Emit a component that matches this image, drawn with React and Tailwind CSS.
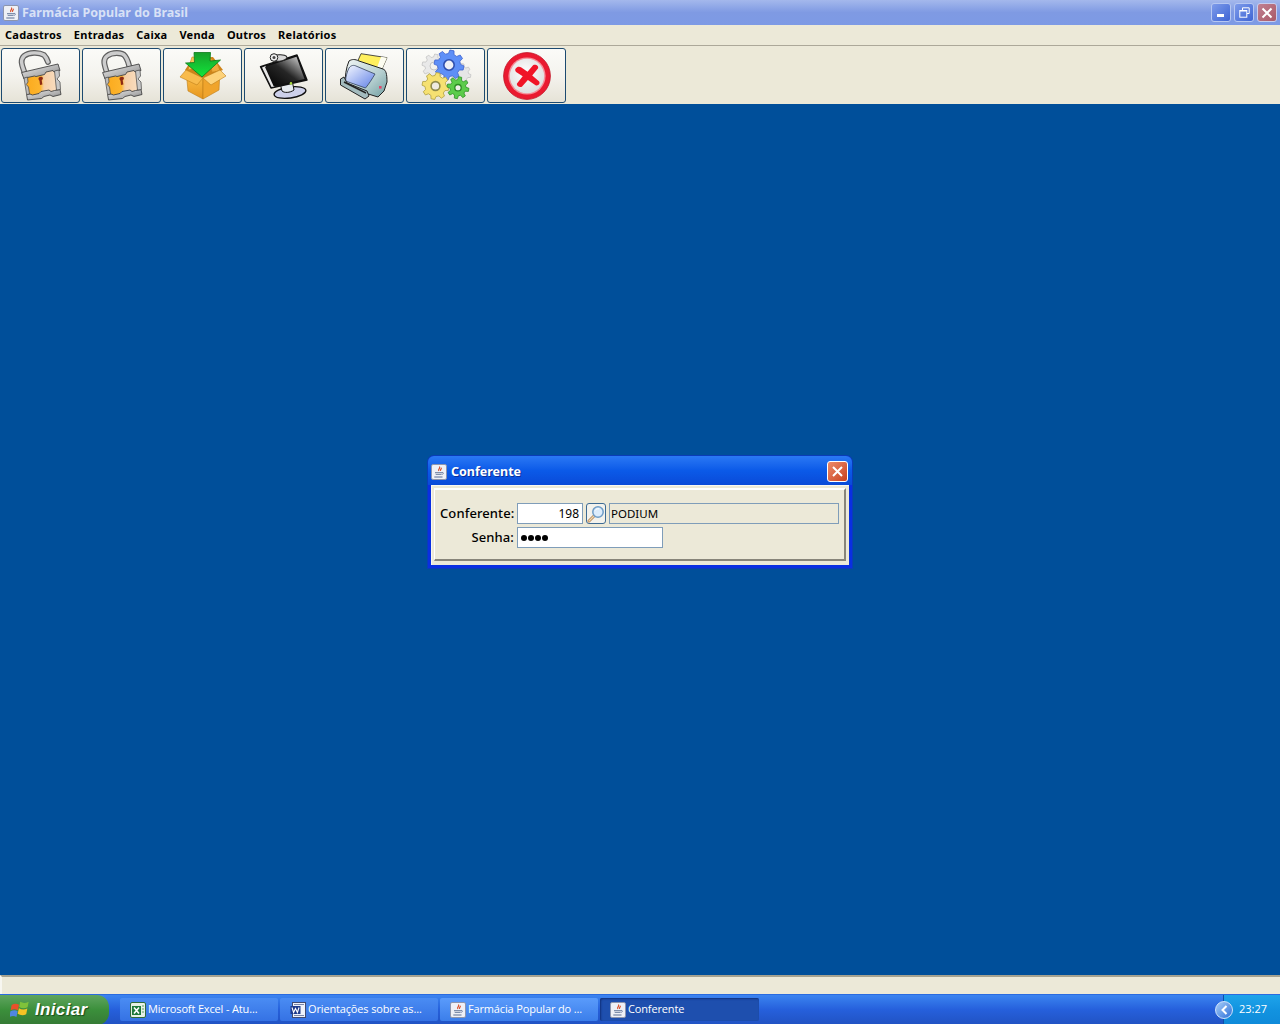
import React from "react";

function gearPath(cx, cy, R, r, teeth) {
  const pts = [];
  const step = (Math.PI * 2) / teeth;
  for (let i = 0; i < teeth; i++) {
    const a = i * step + 0.2;
    const q = (ang, rad) => `${(cx + Math.cos(ang) * rad).toFixed(2)} ${(cy + Math.sin(ang) * rad).toFixed(2)}`;
    pts.push(q(a - step * 0.32, r), q(a - step * 0.18, R), q(a + step * 0.18, R), q(a + step * 0.32, r));
  }
  return "M" + pts.join("L") + "Z";
}

function JavaIcon({ size = 16 }) {
  return (
    <svg width={size} height={size} viewBox="0 0 16 16" className="shrink-0">
      <rect x="0.5" y="0.5" width="15" height="15" rx="1.5" fill="#eef0f6" stroke="#8d95ad" />
      <path d="M8.5 2.5c1.4 1.6-1.8 2.6-.7 4.6M10.3 3.8c.5 1-1.1 1.6-.8 3" fill="none" stroke="#d9471f" strokeWidth="1.1" />
      <path d="M4 8.3h7v.9H4zM4.7 10.2h5.6v.9H4.7zM3.3 12.4h8.2v1H3.3z" fill="#5b6f94" />
      <path d="M11 8.4c2 -.3 2 1.9 -.4 2" fill="none" stroke="#5b6f94" strokeWidth=".8" />
    </svg>
  );
}

function LockIcon({ closed, id }) {
  const sh = closed
    ? "M9 21C7 14 4 8 9 4C14 0 24 0 27 4C30 8 31 12 32 18"
    : "M8 22C6 15 2 9 7 4C12 0 22 0 27 3C29 5 30 7 31 10";
  return (
    <svg width="48" height="48" viewBox="0 0 48 48" className="overflow-visible">
      <defs>
        <linearGradient id={`lockSilver${id}`} x1="0" y1="0" x2="1" y2="1">
          <stop offset="0" stopColor="#ececec" />
          <stop offset=".6" stopColor="#b0b0b0" />
          <stop offset="1" stopColor="#7c7c7c" />
        </linearGradient>
        <linearGradient id={`lockBody${id}`} x1="0" y1="0" x2="1" y2="0">
          <stop offset="0" stopColor="#fba91c" />
          <stop offset=".45" stopColor="#fdb52e" />
          <stop offset=".56" stopColor="#f6cfa6" />
          <stop offset="1" stopColor="#f9dfc4" />
        </linearGradient>
      </defs>
      <path d={sh} fill="none" stroke="#5e5e5e" strokeWidth="5.8" strokeLinecap="round" />
      <path d={sh} fill="none" stroke="#cdcdcd" strokeWidth="3.4" strokeLinecap="round" />
      <path d="M8 23L39 16L42 40L11 46Z" fill={`url(#lockBody${id})`} />
      <path d="M21.5 26.5c0-2 3.5-2.6 4.3-.8c.4 1.2-.4 2.1-1.1 2.5l.7 4.3l-2.4.5l-.5-4.3c-.6-.4-1-1.2-1-2.2Z" fill="#8e2a12" />
      <path d="M7 27L4.6 20.5L41 12L43 18.5L37 20L36 18.5L29 20L27.5 22.5L19 24.5L17.5 24L10.5 25.5Z" fill={`url(#lockSilver${id})`} stroke="#444" strokeWidth=".9" />
      <path d="M10.5 48L9.6 42.5L13 42L15.5 43L22 41.5L24 39.5L32 38L34 39.5L37.5 38.5L43 37.5L44 42.5L36 44.5L33 43L27 44.5L24.5 46.5Z" fill={`url(#lockSilver${id})`} stroke="#444" strokeWidth=".9" />
      <path d="M7 26L10.5 25L11 30L9.3 32.5L11.5 35L12.5 42L9.6 42.5Z" fill="#bdbdbd" stroke="#444" strokeWidth=".7" />
      <path d="M37.5 19L42 18L42.5 24L40 27L43 30L43.5 37.5L39.5 38Z" fill="#c8c8c8" stroke="#444" strokeWidth=".7" />
    </svg>
  );
}

function BoxIcon() {
  return (
    <svg width="48" height="48" viewBox="0 0 48 48" className="overflow-visible">
      <defs>
        <linearGradient id="boxFront" x1="0" y1="0" x2="0" y2="1">
          <stop offset="0" stopColor="#ffc64f" />
          <stop offset="1" stopColor="#e6951d" />
        </linearGradient>
        <linearGradient id="boxArrow" x1="0" y1="0" x2="0" y2="1">
          <stop offset="0" stopColor="#17a02a" />
          <stop offset="1" stopColor="#12e63c" />
        </linearGradient>
      </defs>
      <path d="M14 6L34 5L44 18L24 26L6 18Z" fill="#cf8419" />
      <path d="M13 5L30 6L26 13L9 18Z" fill="#fdc559" stroke="#c98720" strokeWidth=".6" />
      <path d="M31 6L38 11L41 19L33 20Z" fill="#eeaa3c" stroke="#c98720" strokeWidth=".5" />
      <path d="M7 18L24 26L24 47L9 39Z" fill="url(#boxFront)" stroke="#be7e1a" strokeWidth=".6" />
      <path d="M24 26L41 18L40 38L24 47Z" fill="#f0a42c" stroke="#be7e1a" strokeWidth=".6" />
      <path d="M7 18L1 25L18 33L24 26Z" fill="#f8bb4c" stroke="#be7e1a" strokeWidth=".6" />
      <path d="M41 18L47 24L32 33L24 26Z" fill="#fdd27a" stroke="#be7e1a" strokeWidth=".6" />
      <path d="M15 0.5H31.5L31 9L41.5 8L23 25L6.5 11L15.5 10.5Z" fill="url(#boxArrow)" stroke="#0b7a19" strokeWidth=".8" />
    </svg>
  );
}

function MonitorIcon() {
  return (
    <svg width="48" height="48" viewBox="0 0 48 48" className="overflow-visible">
      <defs>
        <linearGradient id="monScreen" x1="0" y1="1" x2="1" y2="0">
          <stop offset="0" stopColor="#000" />
          <stop offset=".5" stopColor="#262626" />
          <stop offset="1" stopColor="#e4e4e4" />
        </linearGradient>
      </defs>
      <ellipse cx="30" cy="40.5" rx="16" ry="5.5" transform="rotate(-8 30 40.5)" fill="#cdd0ea" stroke="#111" strokeWidth="1.4" />
      <path d="M20 31L32 28L34 38C30 41 24 41 22 39Z" fill="#e7eaf0" stroke="#111" />
      <path d="M0.5 14.7L37 3L47 28L11 36Z" fill="#111" stroke="#111" strokeWidth="1.4" strokeLinejoin="round" />
      <path d="M2 15.5L5.5 14L14.5 34.5L11.5 35Z" fill="#e8e8e8" />
      <path d="M5 15L36.5 4.8L44.5 27L13.5 34Z" fill="url(#monScreen)" />
      <circle cx="31" cy="31.4" r="1.3" fill="#a6d640" />
      <ellipse cx="19" cy="6" rx="8" ry="3.2" transform="rotate(-5 19 6)" fill="#d8d8d8" stroke="#222" />
      <circle cx="14" cy="5.5" r="3.8" fill="#f0f0f0" stroke="#222" />
      <circle cx="14" cy="5.5" r="1.5" fill="#444" />
    </svg>
  );
}

function PrinterIcon() {
  return (
    <svg width="48" height="48" viewBox="0 0 48 48" className="overflow-visible">
      <defs>
        <linearGradient id="printerBody" x1="0" y1="0" x2="1" y2="1">
          <stop offset="0" stopColor="#f0f5f5" />
          <stop offset=".6" stopColor="#b6cfd0" />
          <stop offset="1" stopColor="#6f9da0" />
        </linearGradient>
        <linearGradient id="printerPanel" x1="0" y1="0" x2="1" y2="1">
          <stop offset="0" stopColor="#f5f8ff" />
          <stop offset="1" stopColor="#5f80e6" />
        </linearGradient>
      </defs>
      <path d="M20 1.7L46 5.7L41 17L16 10.7Z" fill="#fff05e" stroke="#222" strokeWidth=".8" />
      <path d="M40 4.8L46 5.7L41 17L36 15.7Z" fill="#fdfdf1" />
      <path d="M8 9C11 7 14 7 18 9L42 17C45 18 46 22 46 30L43 39L37 45L24 41L4 33C4 24 5 16 8 9Z" fill="url(#printerBody)" stroke="#222" strokeWidth="1" />
      <path d="M8 16C10 13 13 13 15 14L34 22C31 27 28 32 24.5 36L4.5 29C5 24 6 20 8 16Z" fill="url(#printerPanel)" stroke="#33415c" strokeWidth=".8" />
      <path d="M-.5 27L3 25L6 31L26 39L28 44L24 47L-.5 33Z" fill="#a3bbbe" stroke="#222" strokeWidth="1" />
      <path d="M3 30L25 41" stroke="#222" strokeWidth="1.4" />
      <rect x="38" y="34" width="2.6" height="2.6" fill="#e0486a" />
    </svg>
  );
}

function GearsIcon() {
  return (
    <svg width="50" height="50" viewBox="0 0 50 50" className="overflow-visible">
      <path d={gearPath(13, 15, 12, 9, 8)} fill="#e9e9e9" stroke="#c4c4c4" strokeWidth=".8" />
      <circle cx="13" cy="15" r="4" fill="#f4f3ee" stroke="#c4c4c4" />
      <path d={gearPath(39.5, 23, 10.5, 8, 8)} fill="#e6e6e6" stroke="#c4c4c4" strokeWidth=".8" />
      <path d={gearPath(28, 14, 15, 11.5, 8)} fill="#5e8ff7" stroke="#3d62cf" strokeWidth=".8" />
      <circle cx="28" cy="14" r="5.2" fill="#eef0f6" stroke="#2f4fae" strokeWidth="1.6" />
      <path d={gearPath(14.5, 35, 13.5, 10.5, 8)} fill="#f6e171" stroke="#b0a040" strokeWidth=".8" />
      <circle cx="14.5" cy="35" r="4.4" fill="#eeeae0" stroke="#8f8a4a" strokeWidth="1.6" />
      <path d={gearPath(37, 36.7, 11, 8, 8)} fill="#5ccc4b" stroke="#2f9026" strokeWidth=".8" />
      <circle cx="37" cy="36.7" r="3.2" fill="#eef0ea" stroke="#2c8a23" strokeWidth="1.3" />
    </svg>
  );
}

function StopIcon() {
  return (
    <svg width="48" height="48" viewBox="0 0 48 48" className="overflow-visible">
      <defs>
        <radialGradient id="stopFace" cx=".45" cy=".4" r=".7">
          <stop offset="0" stopColor="#ffffff" />
          <stop offset="1" stopColor="#d9d9d9" />
        </radialGradient>
      </defs>
      <circle cx="24" cy="24" r="23.4" fill="#ea1a30" stroke="#c01426" strokeWidth=".8" />
      <circle cx="24" cy="24" r="18.6" fill="#f58e98" />
      <circle cx="24" cy="24" r="17.2" fill="url(#stopFace)" />
      <path
        transform="translate(24 24) scale(.95 .82) rotate(-5) translate(-24 -24)"
        d="M12.5 14.5C15 11 17.5 12 19 13.2L25 19L31.5 11.5C34 10 37.5 12.5 36.5 15.5L29.5 24L36 31.5C37.5 34 35 37.5 32 36L24.5 29L17.5 36.5C15 37.5 12 35.5 12.5 32.5L19.5 24L13 18C12.3 17 12 15.5 12.5 14.5Z"
        fill="#f01427"
      />
    </svg>
  );
}

function Magnifier() {
  return (
    <svg width="18" height="18" viewBox="0 0 18 18">
      <path d="M2 16L8 10" stroke="#b8895a" strokeWidth="3" strokeLinecap="round" />
      <path d="M2 16L8 10" stroke="#f0d9b0" strokeWidth="1.2" strokeLinecap="round" />
      <circle cx="11" cy="7" r="5.2" fill="#dcecfb" stroke="#6e9cc6" strokeWidth="1.5" />
      <path d="M8.2 5.5C9 4 10.5 3.6 12 3.8" stroke="#fff" fill="none" />
    </svg>
  );
}

function XpFlag() {
  return (
    <svg width="20" height="20" viewBox="0 0 18 18">
      <path d="M1.5 4.5C4 3 6 3.3 8.2 4.3L7 9.2C5 8 3 8 .6 9.2Z" fill="#e8502a" />
      <path d="M9.2 1.6C11.4 3 14 3 16.8 1.5L15.8 6.5C13.2 7.8 10.7 7.6 8.2 6.3Z" fill="#7fc23a" />
      <path d="M.4 10.2C3 9 5 9 6.9 10.2L5.8 15.4C3.7 14 2 14 -.6 15.3Z" fill="#4f86e0" />
      <path d="M8 7.4C10.4 8.8 13 9 15.6 7.6L14.6 12.8C12 14.2 9.3 14 6.9 12.4Z" fill="#f6c324" />
    </svg>
  );
}

function ExcelIcon() {
  return (
    <svg width="16" height="16" viewBox="0 0 16 16" className="shrink-0">
      <rect x="0.5" y="0.5" width="15" height="15" rx="1.5" fill="#e6f1e4" stroke="#2f6b3a" />
      <path d="M2 4H11V13H2Z" fill="#1f7a3a" />
      <path d="M4 5.5L9 11.5M9 5.5L4 11.5" stroke="#fff" strokeWidth="1.6" />
      <path d="M12 4H14M12 7H14M12 10H14" stroke="#5f9a63" />
    </svg>
  );
}

function WordIcon() {
  return (
    <svg width="16" height="16" viewBox="0 0 16 16" className="shrink-0">
      <rect x="2.5" y="0.5" width="13" height="15" fill="#eef2fb" stroke="#404a70" />
      <path d="M4 2.5H14M4 13.5H14" stroke="#7a86aa" />
      <rect x="0.5" y="4" width="10" height="8" fill="#1f3b8c" />
      <path d="M2 5.5L3.6 10.5L5.5 6.5L7.4 10.5L9 5.5" stroke="#fff" fill="none" strokeWidth="1.1" />
    </svg>
  );
}

const tbBtn =
  "w-[79px] h-[55px] shrink-0 flex items-center justify-center rounded-[3px] border border-[#1c4a70] bg-gradient-to-b from-[#fbfbf8] via-[#f4f3ee] to-[#e6e3d7]";

function TaskButton({ icon, label, active, current, w }) {
  return (
    <div
      className={
        "h-[23px] rounded-[2px] flex items-center pl-[10px] text-[11px] tracking-[-0.15px] text-white shrink-0 " +
        w +
        (current
          ? " bg-[#1e4fae] shadow-[inset_1px_1px_2px_#10307a]"
          : active
            ? " bg-gradient-to-b from-[#5a9bfb] to-[#3b7eea]"
            : " bg-gradient-to-b from-[#4a8cf3] to-[#3572e4]")
      }
    >
      {icon}
      <span className="ml-[2px] whitespace-nowrap">{label}</span>
    </div>
  );
}

export default function App() {
  return (
    <div className="relative w-[1280px] h-[1024px] overflow-hidden flex flex-col bg-[#004f9a] font-['Liberation_Sans',Arial,sans-serif]">
      {/* Title bar */}
      <div className="h-[25px] shrink-0 flex items-center pl-[3px] pr-[3px] bg-gradient-to-b from-[#a4b8ec] via-[#7f9ae3] to-[#7d9ae5]">
        <JavaIcon />
        <span className="ml-[3px] pt-[2px] text-[12.5px] font-bold text-[#d8e1f6] font-['Noto_Sans',sans-serif] whitespace-nowrap">
          Farmácia Popular do Brasil
        </span>
        <div className="ml-auto flex items-center gap-[3px]">
          <div className="w-[20px] h-[19px] rounded-[3px] border border-[#b6c7f2] bg-gradient-to-br from-[#7e9bea] to-[#3f64d4] flex items-end pl-[5px] pb-[4px]">
            <div className="w-[7px] h-[3px] bg-white" />
          </div>
          <div className="w-[20px] h-[19px] rounded-[3px] border border-[#b6c7f2] bg-gradient-to-br from-[#7e9bea] to-[#3f64d4] flex items-center justify-center">
            <svg width="11" height="11" viewBox="0 0 11 11">
              <path d="M3.5 3V.8H10.2V6.5H8" fill="none" stroke="#fff" />
              <rect x=".8" y="3.5" width="7" height="6.7" fill="none" stroke="#fff" />
              <path d="M1 4h6.5" stroke="#fff" />
            </svg>
          </div>
          <div className="w-[20px] h-[19px] rounded-[3px] border border-[#c8cdee] bg-gradient-to-br from-[#c08092] to-[#aa5a68] flex items-center justify-center">
            <svg width="12" height="12" viewBox="0 0 12 12">
              <path d="M1.5 1.5L10.5 10.5M10.5 1.5L1.5 10.5" stroke="#fff" strokeWidth="2" />
            </svg>
          </div>
        </div>
      </div>

      {/* Menu */}
      <div className="h-[21px] shrink-0 flex items-center bg-[#ece9d8] border-b border-[#aca899] pl-[5px] gap-[12px] text-[11px] font-bold tracking-[0.25px] text-black font-['Noto_Sans',sans-serif]">
        <span>Cadastros</span>
        <span>Entradas</span>
        <span>Caixa</span>
        <span>Venda</span>
        <span>Outros</span>
        <span>Relatórios</span>
      </div>

      {/* Toolbar */}
      <div className="h-[58px] shrink-0 flex items-start pt-[2px] pl-[1px] gap-[2px] bg-[#ece9d8]">
        <div className={tbBtn}><LockIcon id="a" /></div>
        <div className={tbBtn}><LockIcon id="b" closed /></div>
        <div className={tbBtn}><BoxIcon /></div>
        <div className={tbBtn}><MonitorIcon /></div>
        <div className={tbBtn}><PrinterIcon /></div>
        <div className={tbBtn}><GearsIcon /></div>
        <div className={tbBtn}><StopIcon /></div>
      </div>

      {/* Desktop */}
      <div className="flex-1 bg-[#004f9a]" />

      {/* Status bar */}
      <div className="h-[19px] shrink-0 bg-[#ece9d8] border-t-2 border-t-[#a5a290] border-l-2 border-l-[#f7f6f0]" />

      {/* Taskbar */}
      <div className="h-[30px] shrink-0 flex items-center bg-gradient-to-b from-[#3c84f0] via-[#2660dc] to-[#2153c4] border-t border-t-[#2a6be0]">
        <div className="w-[109px] h-[30px] shrink-0 rounded-r-[12px] flex items-center pl-[10px] bg-gradient-to-b from-[#5fa55f] via-[#3b8f3b] to-[#357a35]">
          <XpFlag />
          <span className="ml-[5px] text-[17px] font-bold italic text-white tracking-[0.02em] font-['Liberation_Sans',sans-serif] [text-shadow:1px_1px_1px_#1a4a1a]">
            Iniciar
          </span>
        </div>
        <div className="ml-[11px] flex items-center gap-[2px] font-['Open_Sans',sans-serif]">
          <TaskButton w="w-[158px]" icon={<ExcelIcon />} label="Microsoft Excel - Atu..." />
          <TaskButton w="w-[158px]" icon={<WordIcon />} label="Orientações sobre as..." />
          <TaskButton w="w-[158px]" active icon={<JavaIcon />} label="Farmácia Popular do ..." />
          <TaskButton w="w-[159px]" current icon={<JavaIcon />} label="Conferente" />
        </div>
        <div className="ml-auto w-[57px] h-[30px] relative flex items-center justify-end pr-[13px] bg-gradient-to-b from-[#1ea4ea] via-[#1293e0] to-[#0f8ad9] border-l border-l-[#0f4fa8] text-[11px] text-white font-['Open_Sans',sans-serif]">
          <div className="absolute left-[-9px] top-[6px] w-[18px] h-[18px] rounded-full bg-gradient-to-br from-[#a9cdf6] to-[#2a6fd8] border border-[#cfe3fb] flex items-center justify-center">
            <svg width="9" height="10" viewBox="0 0 9 10">
              <path d="M6.5 1L2.5 5L6.5 9" fill="none" stroke="#fff" strokeWidth="2" />
            </svg>
          </div>
          23:27
        </div>
      </div>

      {/* Dialog window floating on desktop */}
      <div className="absolute left-[428px] top-[456px] w-[424px] h-[112px] rounded-t-[6px] flex flex-col bg-[#0a2fe2] px-[3px] pb-[3px] shadow-[0_0_0_1px_#0a3cb8]">
        <div className="h-[29px] -mx-[3px] px-[3px] pt-[3px] rounded-t-[6px] shrink-0 flex items-center bg-gradient-to-b from-[#2a78f4] via-[#0b5ae8] to-[#0a4ad8]">
          <JavaIcon />
          <span className="ml-[4px] pt-[1px] text-[12.5px] font-bold text-white font-['Noto_Sans',sans-serif] [text-shadow:1px_1px_0_#0a2f9a]">
            Conferente
          </span>
          <div className="ml-auto mr-[1px] mb-[2px] w-[21px] h-[21px] rounded-[3px] border border-white bg-gradient-to-br from-[#ec8a68] to-[#c8401c] flex items-center justify-center">
            <svg width="13" height="13" viewBox="0 0 13 13">
              <path d="M2 2L11 11M11 2L2 11" stroke="#fff" strokeWidth="2" />
            </svg>
          </div>
        </div>
        <div className="flex-1 bg-[#ece9d8] p-[2px] pr-[3px] pb-[4px] border-t border-l border-[#f8f7f0]">
          <div className="h-full border-t-[2px] border-l border-t-white border-l-white border-r-[2px] border-b-[2px] border-r-[#88857a] border-b-[#88857a] pl-[5px] pt-[13px] text-black font-['Noto_Sans',sans-serif]">
            <div className="flex items-center h-[21px]">
              <span className="w-[74px] text-right text-[13px] tracking-[0.1px] font-medium">Conferente:</span>
              <div className="ml-[3px] w-[66px] h-[21px] bg-white border border-[#7f9db9] flex items-center justify-end pr-[3px] text-[12px]">198</div>
              <div className="ml-[3px] w-[20px] h-[21px] rounded-[3px] border border-[#3d6b94] bg-[#f3f2ec] flex items-center justify-center"><Magnifier /></div>
              <div className="ml-[3px] w-[230px] h-[21px] bg-[#ece9d8] border border-[#7f9db9] flex items-center pl-[1px] text-[11.5px]">PODIUM</div>
            </div>
            <div className="flex items-center h-[21px] mt-[3px]">
              <span className="w-[74px] text-right text-[13px] tracking-[0.1px] font-medium">Senha:</span>
              <div className="ml-[3px] w-[146px] h-[21px] bg-white border border-[#7f9db9] flex items-center pl-[3px] gap-[1px]">
                <span className="w-[6px] h-[6px] rounded-full bg-black" />
                <span className="w-[6px] h-[6px] rounded-full bg-black" />
                <span className="w-[6px] h-[6px] rounded-full bg-black" />
                <span className="w-[6px] h-[6px] rounded-full bg-black" />
              </div>
            </div>
          </div>
        </div>
      </div>
    </div>
  );
}
